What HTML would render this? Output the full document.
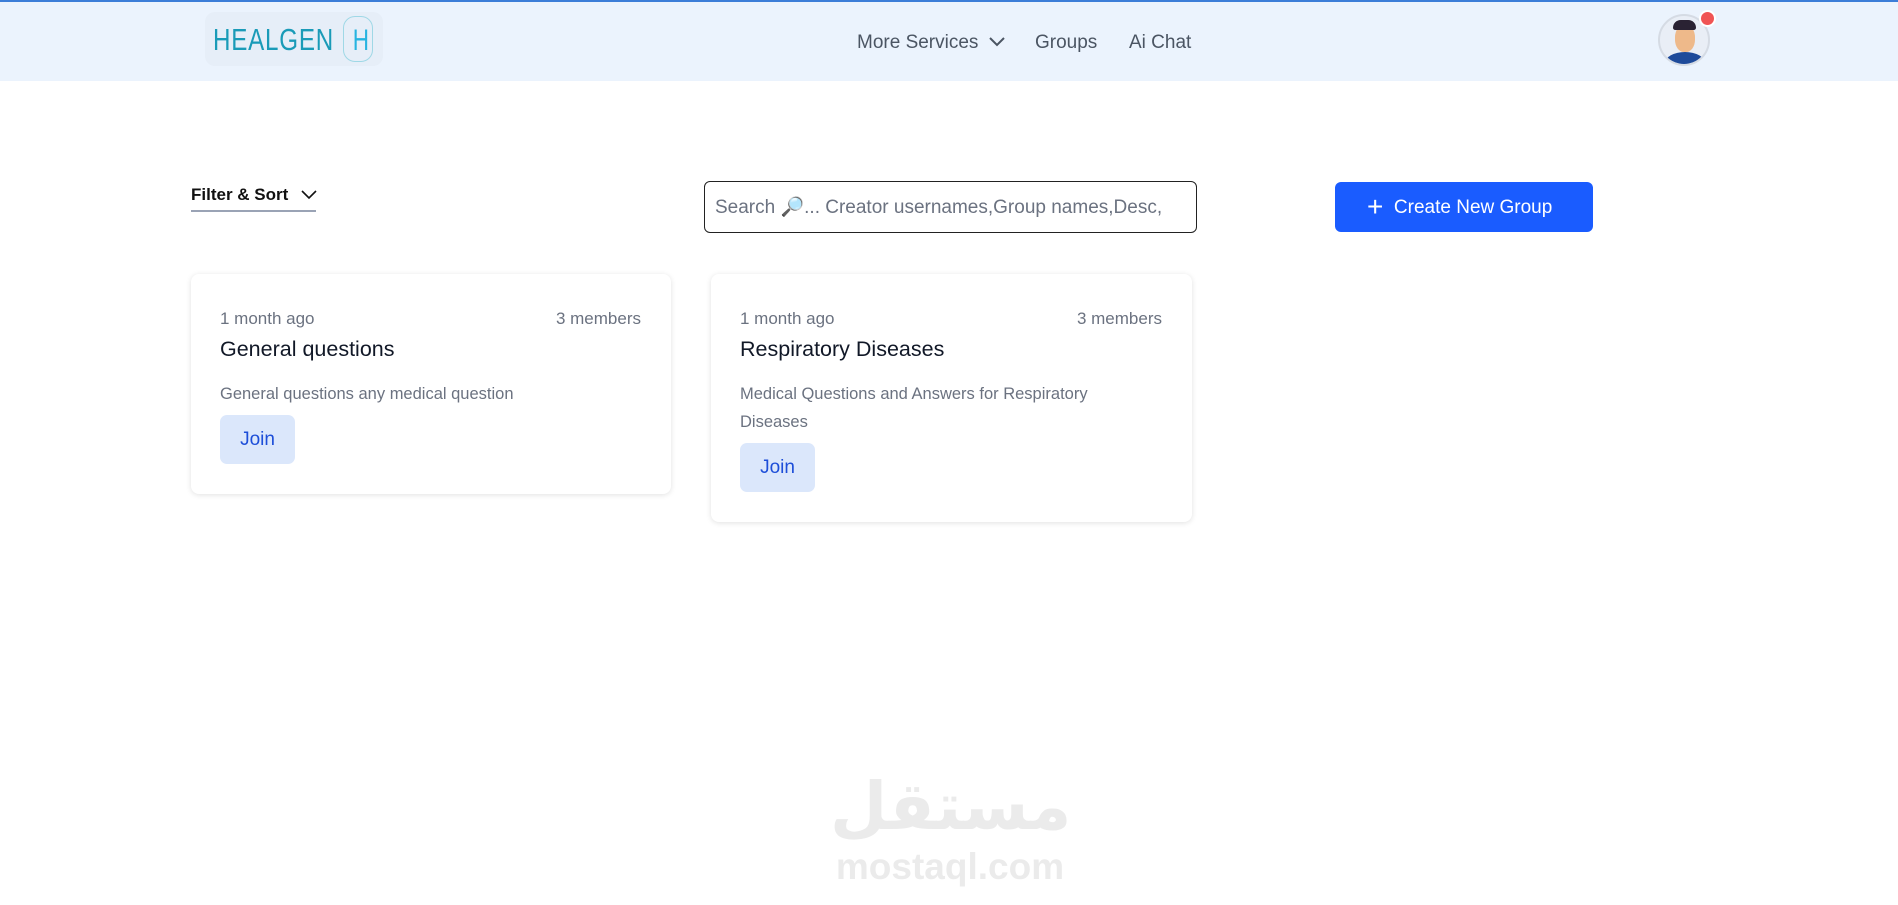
<!DOCTYPE html>
<html><head><meta charset="utf-8"><style>
*{box-sizing:border-box;margin:0;padding:0}
body{width:1898px;height:905px;background:#fff;font-family:"Liberation Sans",sans-serif;position:relative;overflow:hidden;color:#111827}
.hdr{position:absolute;left:0;top:0;width:1898px;height:81px;background:#ebf3fd;border-top:2px solid #3b7dd8}
.nav{position:absolute;top:30px;font-size:19px;color:#4b5563}
.abs{position:absolute}
.card{position:absolute;background:#fff;border-radius:8px;box-shadow:0 1px 6px rgba(0,0,0,.12)}
.meta{position:absolute;top:35px;font-size:17px;color:#6b7280}
.title{position:absolute;left:29px;top:63px;font-size:21.5px;color:#111827}
.desc{position:absolute;left:29px;top:106px;font-size:16.5px;color:#6b7280;line-height:28px;width:420px}
.join{position:absolute;left:29px;width:75px;height:49px;background:#dbe7fb;border-radius:7px;color:#1d4ed8;font-size:19px;text-align:center;line-height:49px}
</style></head><body>
<div class="hdr">
 <div class="abs" style="left:205px;top:10px;width:178px;height:54px;background:#e6eef8;border-radius:10px"></div>
 <div class="abs" style="left:213px;top:20px;font-family:'Liberation Sans',sans-serif;font-weight:300;font-size:31px;color:#1a9bb8;letter-spacing:1px;transform:scaleX(.78);transform-origin:left">HEALGEN</div>
 <div class="abs" style="left:343px;top:14px;width:30px;height:46px;border:1.5px solid #9fd8e6;border-radius:12px"></div>
 <div class="abs" style="left:350px;top:22px;font-size:30px;color:#27b4e0;transform:scaleX(.75)">H</div>
 <div class="nav" style="left:857px">More Services <svg width="18" height="12" viewBox="0 0 18 12" style="margin-left:4px"><path d="M2 2l7 7 7-7" fill="none" stroke="#4b5563" stroke-width="2"/></svg></div>
 <div class="nav" style="left:1035px">Groups</div>
 <div class="nav" style="left:1129px">Ai Chat</div>
 <div class="abs" style="left:1658px;top:12px;width:52px;height:52px;border-radius:50%;background:#e9eef6;border:2px solid #d5dbe4;overflow:hidden">
  <div class="abs" style="left:5px;top:36px;width:40px;height:22px;border-radius:50% 50% 0 0;background:#1d4a9a"></div>
  <div class="abs" style="left:15px;top:9px;width:20px;height:27px;border-radius:45%;background:#eeb98a"></div>
  <div class="abs" style="left:13px;top:4px;width:23px;height:10px;border-radius:10px 10px 3px 3px;background:#2a2233"></div>
 </div>
 <div class="abs" style="left:1699px;top:8px;width:17px;height:17px;border-radius:50%;background:#f05454;border:2px solid #fff"></div>
</div>
<div class="abs" style="left:191px;top:185px;font-size:17px;font-weight:bold;color:#111">Filter &amp; Sort <svg width="16" height="10" viewBox="0 0 16 10" style="margin-left:8px"><path d="M1 1l7 7 7-7" fill="none" stroke="#111" stroke-width="1.6"/></svg></div>
<div class="abs" style="left:191px;top:210px;width:125px;height:1.5px;background:#9aa3b5"></div>
<div class="abs" style="left:704px;top:181px;width:493px;height:52px;border:1.5px solid #222;border-radius:6px;padding-left:10px;line-height:52px;font-size:19px;color:#6b7280">Search 🔎... Creator usernames,Group names,Desc,</div>
<div class="abs" style="left:1335px;top:182px;width:258px;height:50px;background:#1a5cff;border-radius:6px;color:#fff;font-size:19px;line-height:50px;padding-left:32px"><span style="font-size:28px;vertical-align:-3px;font-weight:300">+</span>&nbsp; Create New Group</div>
<div class="card" style="left:191px;top:274px;width:480px;height:220px">
 <div class="meta" style="left:29px">1 month ago</div><div class="meta" style="right:30px">3 members</div>
 <div class="title">General questions</div>
 <div class="desc">General questions any medical question</div>
 <div class="join" style="top:141px">Join</div>
</div>
<div class="card" style="left:711px;top:274px;width:481px;height:248px">
 <div class="meta" style="left:29px">1 month ago</div><div class="meta" style="right:30px">3 members</div>
 <div class="title">Respiratory Diseases</div>
 <div class="desc">Medical Questions and Answers for Respiratory Diseases</div>
 <div class="join" style="top:169px">Join</div>
</div>
<div class="abs" style="left:830px;top:762px;width:240px;text-align:center;font-family:'DejaVu Sans',sans-serif;font-weight:bold;font-size:66px;color:#ebebeb;line-height:90px">مستقل</div>
<div class="abs" style="left:830px;top:846px;width:240px;text-align:center;font-weight:bold;font-size:37px;color:#ebebeb">mostaql.com</div>
</body></html>
